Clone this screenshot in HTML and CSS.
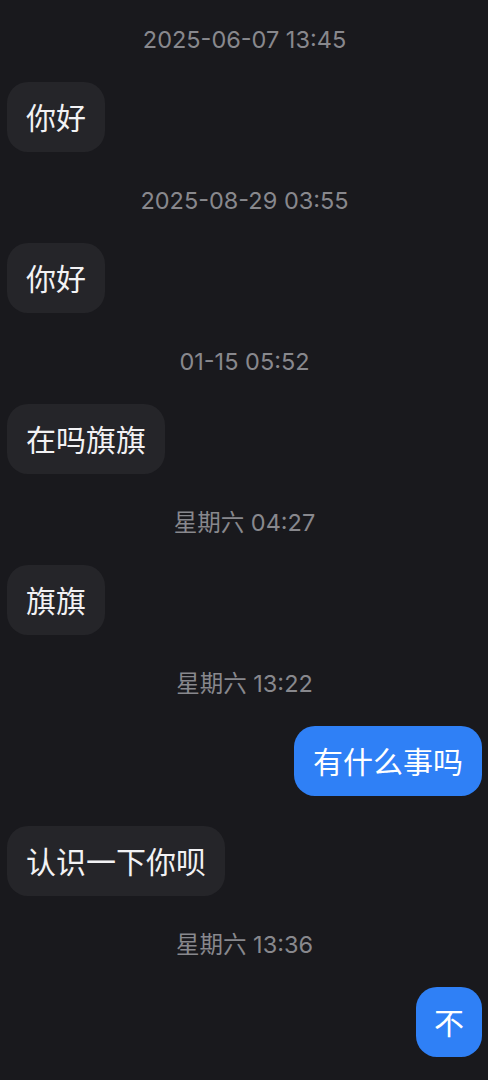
FILE: index.html
```html
<!DOCTYPE html>
<html lang="zh-CN">
<head>
<meta charset="utf-8">
<title>Chat</title>
<link rel="stylesheet" href="styles.css">
</head>
<body>
<main class="chat">
  <div class="ts">2025-06-07 13:45</div>
  <div class="row in"><div class="bubble">你好</div></div>
  <div class="ts">2025-08-29 03:55</div>
  <div class="row in"><div class="bubble">你好</div></div>
  <div class="ts">01-15 05:52</div>
  <div class="row in"><div class="bubble">在吗旗旗</div></div>
  <div class="ts">星期六 04:27</div>
  <div class="row in"><div class="bubble">旗旗</div></div>
  <div class="ts">星期六 13:22</div>
  <div class="row out"><div class="bubble">有什么事吗</div></div>
  <div class="row in"><div class="bubble">认识一下你呗</div></div>
  <div class="ts">星期六 13:36</div>
  <div class="row out"><div class="bubble single">不</div></div>
</main>
</body>
</html>
```
FILE: styles.css
```css
html, body {
  margin: 0;
  padding: 0;
  background: #19191d;
}
body {
  width: 488px;
  height: 1080px;
  overflow: hidden;
  font-family: Inter, "Noto Sans CJK SC", sans-serif;
}
.chat {
  display: flex;
  flex-direction: column;
  padding: 0 6px 0 7px;
}
.ts {
  height: 30px;
  line-height: 30px;
  margin: 34px 0 27px;
  text-align: center;
  font-size: 23.5px;
  color: #88888d;
}
.ts:first-child {
  margin-top: 25px;
}
.row {
  display: flex;
}
.row + .row {
  margin-top: 30px;
}
.row.in { justify-content: flex-start; }
.row.out { justify-content: flex-end; }
.bubble {
  height: 70px;
  box-sizing: border-box;
  display: flex;
  align-items: center;
  padding: 0 19px 3px;
  border-radius: 21px;
  background: #252529;
  color: #f2f2f4;
  font-family: "Noto Sans CJK SC", sans-serif;
  font-size: 30px;
  line-height: 1;
}
.row.out .bubble {
  background: #2f80f6;
  color: #ffffff;
}
.bubble.single {
  width: 66px;
  justify-content: center;
  padding: 0 0 3px;
}
```
